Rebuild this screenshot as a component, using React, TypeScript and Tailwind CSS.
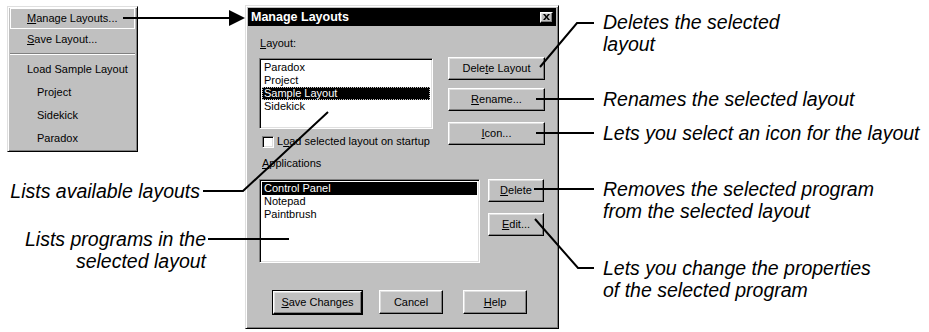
import React from "react";

const raised =
  "bg-[#c0c0c0] border border-t-white border-l-white border-r-black border-b-black shadow-[inset_-1px_-1px_0_#808080,inset_1px_1px_0_#dfdfdf]";
const sunken =
  "bg-white border border-t-[#808080] border-l-[#808080] border-r-white border-b-white shadow-[inset_1px_1px_0_#000,inset_-1px_-1px_0_#dfdfdf]";

function U({ children }: { children: React.ReactNode }) {
  return <span className="underline underline-offset-[1px]">{children}</span>;
}

function Btn({ children, className = "" }: { children: React.ReactNode; className?: string }) {
  return (
    <div className={`${raised} h-[23px] flex items-center justify-center text-[11px] leading-none ${className}`}>
      {children}
    </div>
  );
}

function MenuItem({ children, indent = false }: { children: React.ReactNode; indent?: boolean }) {
  return (
    <div className={`h-[23px] flex items-center ${indent ? "pl-[28px]" : "pl-[18px]"}`}>{children}</div>
  );
}

function Callout({ lines, right = false }: { lines: string[]; right?: boolean }) {
  return (
    <div className={`italic text-[19.5px] leading-[22px] text-black whitespace-nowrap ${right ? "text-right" : ""}`}>
      {lines.map((l) => (
        <div key={l}>{l}</div>
      ))}
    </div>
  );
}

export default function App() {
  const layouts = ["Paradox", "Project", "Sample Layout", "Sidekick"];
  const apps = ["Control Panel", "Notepad", "Paintbrush"];

  return (
    <div className="relative w-[929px] h-[332px] bg-white overflow-hidden font-['Liberation_Sans',Arial,sans-serif] text-black">
      <div className="flex">
        {/* left: menu + callouts */}
        <div className="w-[245px] shrink-0 flex flex-col">
          <div className="ml-[7px] mt-[6px] w-[131px] bg-[#c0c0c0] border border-t-[#dfdfdf] border-l-[#dfdfdf] border-r-black border-b-black shadow-[inset_1px_1px_0_#fff,inset_-1px_-1px_0_#808080] p-[1px] text-[11px]">
            <div className="mx-[1px] h-[21px] flex items-center pl-[16px] border border-white">
              <U>M</U>anage Layouts...
            </div>
            <div className="h-[21px] flex items-center pl-[18px]">
              <U>S</U>ave Layout...
            </div>
            <div className="h-[8px] flex items-center px-[1px]">
              <div className="w-full border-t border-t-[#808080] border-b border-b-white" />
            </div>
            <MenuItem>Load Sample Layout</MenuItem>
            <MenuItem indent>Project</MenuItem>
            <MenuItem indent>Sidekick</MenuItem>
            <MenuItem indent>Paradox</MenuItem>
          </div>
          <div className="mt-[28px] pr-[45px]">
            <Callout right lines={["Lists available layouts"]} />
          </div>
          <div className="mt-[26px] pr-[39px]">
            <Callout right lines={["Lists programs in the", "selected layout"]} />
          </div>
        </div>

        {/* dialog */}
        <div className="mt-[5px] w-[314px] h-[324px] shrink-0 bg-[#c0c0c0] border border-t-[#dfdfdf] border-l-[#dfdfdf] border-r-black border-b-black shadow-[inset_1px_1px_0_#fff,inset_-1px_-1px_0_#808080] p-[2px] flex flex-col text-[11px]">
          <div className="h-[18px] bg-black flex items-center justify-between pl-[3px] pr-[3px]">
            <span className="text-white font-bold text-[12.5px] leading-none">Manage Layouts</span>
            <div className={`${raised} w-[13px] h-[11px] flex items-center justify-center`}>
              <svg width="7" height="6" viewBox="0 0 7 6">
                <path d="M0 0h2l1.5 2L5 0h2L4.5 3 7 6H5L3.5 4 2 6H0l2.5-3z" fill="#000" />
              </svg>
            </div>
          </div>

          <div className="flex-1 flex flex-col pl-[11px] pt-[10px]">
            <div className="flex items-start">
              <div className="w-[174px] flex flex-col">
                <div className="h-[14px] leading-[14px] pl-[1px]">
                  <U>L</U>ayout:
                </div>
                <div className={`${sunken} mt-[8px] h-[71px] p-[2px]`}>
                  {layouts.map((l) => (
                    <div
                      key={l}
                      className={`h-[13px] leading-[13px] pl-[2px] ${
                        l === "Sample Layout"
                          ? "bg-black text-white outline outline-1 outline-dotted outline-[#c0c0c0] -outline-offset-1"
                          : ""
                      }`}
                    >
                      {l}
                    </div>
                  ))}
                </div>
                <div className="mt-[6px] h-[13px] flex items-center">
                  <div className={`${sunken} ml-[3px] w-[12px] h-[12px] shrink-0`} />
                  <span className="ml-[3px] whitespace-nowrap">
                    L<U>o</U>ad selected layout on startup
                  </span>
                </div>
              </div>
              <div className="ml-[15px] mt-[21px] w-[97px] flex flex-col">
                <Btn>
                  Dele<U>t</U>e Layout
                </Btn>
                <Btn className="mt-[8px]">
                  <U>R</U>ename...
                </Btn>
                <Btn className="mt-[11px]">
                  <U>I</U>con...
                </Btn>
              </div>
            </div>

            <div className="mt-[8px] h-[14px] leading-[14px] pl-[3px]">
              <U>A</U>pplications
            </div>
            <div className="mt-[9px] flex items-start">
              <div className={`${sunken} w-[221px] h-[84px] p-[2px]`}>
                {apps.map((a, i) => (
                  <div
                    key={a}
                    className={`h-[13px] leading-[13px] pl-[2px] ${i === 0 ? "bg-black text-white" : ""}`}
                  >
                    {a}
                  </div>
                ))}
              </div>
              <div className="ml-[8px] w-[56px] flex flex-col">
                <Btn>
                  <U>D</U>elete
                </Btn>
                <Btn className="mt-[11px]">
                  <U>E</U>dit...
                </Btn>
              </div>
            </div>

            <div className="mt-[27px] flex items-start pl-[13px]">
              <div className="border border-black">
                <Btn className="w-[89px] h-[22px]">
                  <U>S</U>ave Changes
                </Btn>
              </div>
              <Btn className="ml-[16px] w-[64px] h-[24px]">Cancel</Btn>
              <Btn className="ml-[20px] w-[64px] h-[24px]">
                <U>H</U>elp
              </Btn>
            </div>
          </div>
        </div>

        {/* right callouts */}
        <div className="pl-[44px] flex flex-col">
          <div className="mt-[11px]">
            <Callout lines={["Deletes the selected", "layout"]} />
          </div>
          <div className="mt-[33px]">
            <Callout lines={["Renames the selected layout"]} />
          </div>
          <div className="mt-[12px]">
            <Callout lines={["Lets you select an icon for the layout"]} />
          </div>
          <div className="mt-[34px]">
            <Callout lines={["Removes the selected program", "from the selected layout"]} />
          </div>
          <div className="mt-[35px]">
            <Callout lines={["Lets you change the properties", "of the selected program"]} />
          </div>
        </div>
      </div>

      {/* leader lines */}
      <svg className="absolute inset-0 pointer-events-none" width="929" height="332" viewBox="0 0 929 332">
        <g stroke="#000" strokeWidth="2" fill="none">
          <path d="M123 18H230" />
          <path d="M540 67L577 23H594" />
          <path d="M536 99H594" />
          <path d="M536 133H594" />
          <path d="M534 189H594" />
          <path d="M535 219L578 268H594" />
          <path d="M203 191H243L328 112" />
          <path d="M208 239H289" />
        </g>
        <path d="M229 10L245 18L229 26Z" fill="#000" />
      </svg>
    </div>
  );
}
